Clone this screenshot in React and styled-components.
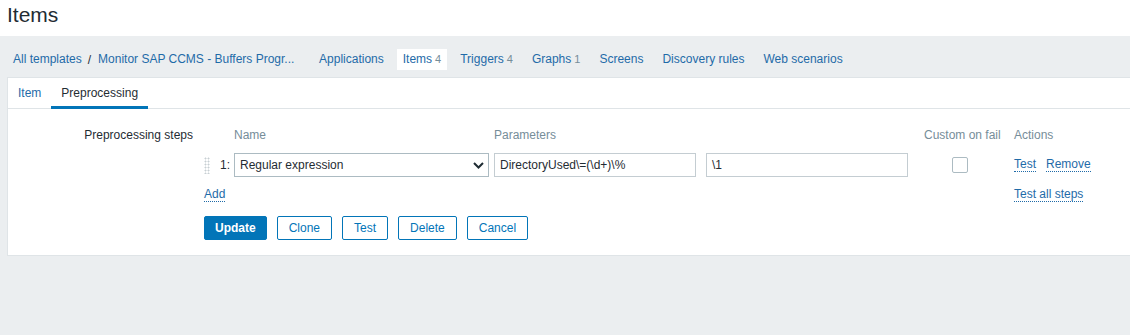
import React from "react";
import styled, { createGlobalStyle } from "styled-components";

const GlobalStyle = createGlobalStyle`
  html, body {
    margin: 0;
    padding: 0;
    background: #ebeef0;
    overflow: hidden;
  }
  body {
    font-family: "Liberation Sans", Arial, sans-serif;
    font-size: 12px;
    color: #1f2c33;
  }
`;

const Page = styled.div`
  width: 1160px;
  min-height: 335px;
  background: #ebeef0;
`;

const Header = styled.header`
  height: 36px;
  box-sizing: border-box;
  background: #fff;
  padding: 3px 0 0 7px;
  h1 {
    margin: 0;
    font-size: 21px;
    font-weight: normal;
    color: #1f2c33;
    line-height: 24px;
  }
`;

const Nav = styled.nav`
  display: flex;
  align-items: center;
  gap: 7px;
  padding: 13px 7px 7px;
  height: 21px;
`;

const Crumbs = styled.div`
  display: flex;
  align-items: center;
`;

const Sep = styled.span`
  color: #1f2c33;
  margin: 0 7px 0 6px;
`;

const NavLink = styled.a`
  display: block;
  padding: 3px 6px 4px;
  color: #1f6ba8;
  text-decoration: none;
  line-height: 14px;
  white-space: nowrap;
  background: ${(p) => (p.$selected ? "#fff" : "transparent")};
  width: ${(p) => (p.$truncate ? "202px" : "auto")};
  overflow: hidden;
  text-overflow: ellipsis;
`;

const Count = styled.span`
  color: #768d99;
  margin-left: 3px;
  font-size: 11px;
`;

const Panel = styled.section`
  margin-left: 7px;
  background: #fff;
  border: 1px solid #dfe4e7;
  border-right: none;
  height: 177px;
`;

const Tabs = styled.div`
  display: flex;
  height: 30px;
  border-bottom: 1px solid #dfe4e7;
`;

const Tab = styled.a`
  display: flex;
  align-items: center;
  padding: 0 10px;
  color: ${(p) => (p.$active ? "#1f2c33" : "#1f6ba8")};
  border-bottom: 3px solid ${(p) => (p.$active ? "#0275b8" : "transparent")};
  margin-bottom: -1px;
  padding-top: 1px;
`;

const Form = styled.div`
  padding-top: 19px;
`;

const FormRow = styled.div`
  display: flex;
  gap: 11px;
`;

const Label = styled.div`
  width: 185px;
  text-align: right;
  line-height: 14px;
  color: #1f2c33;
`;

const Steps = styled.div`
  display: grid;
  grid-template-columns: 30px 260px 212px 218px 90px 120px;
  align-items: center;
`;

const Th = styled.div`
  color: #768d99;
  line-height: 14px;
  height: 14px;
  margin-bottom: 11px;
`;

const Cell = styled.div`
  display: flex;
  align-items: center;
  height: 24px;
  gap: ${(p) => p.$gap || 0}px;
`;

const Handle = styled.span`
  width: 6px;
  height: 17px;
  background-image: radial-gradient(circle, #c8cfd3 0.9px, transparent 1.1px);
  background-size: 3px 3px;
`;

const Num = styled.span`
  margin-left: 9px;
  width: 11px;
  text-align: right;
`;

const SelectBox = styled.div`
  box-sizing: border-box;
  width: 255px;
  height: 24px;
  border: 1px solid #acbbc2;
  display: flex;
  align-items: center;
  justify-content: space-between;
  padding: 0 4px 0 5px;
  color: #1f2c33;
  background: #fff;
  svg {
    display: block;
  }
`;

const Input = styled.div`
  box-sizing: border-box;
  width: 202px;
  height: 24px;
  border: 1px solid #c4cdd2;
  display: flex;
  align-items: center;
  padding: 0 5px;
  color: #1f2c33;
  white-space: pre;
`;

const Check = styled.span`
  box-sizing: border-box;
  width: 16px;
  height: 16px;
  border: 1px solid #acbbc2;
  border-radius: 2px;
  margin-left: 28px;
`;

const DotLink = styled.a`
  color: #1f6ba8;
  text-decoration: none;
  line-height: 13px;
  border-bottom: 1px dotted #1f6ba8;
  white-space: nowrap;
`;

const AddRow = styled.div`
  grid-column: ${(p) => p.$col};
  margin-top: 11px;
  line-height: 14px;
  display: flex;
`;

const Buttons = styled.div`
  display: flex;
  gap: 10px;
  margin: 14px 0 0 196px;
`;

const Button = styled.button`
  height: 24px;
  padding: 0 ${(p) => (p.$primary ? 10 : 11)}px;
  font-family: "Liberation Sans", Arial, sans-serif;
  font-size: 12px;
  border-radius: 2px;
  border: 1px solid #0275b8;
  background: ${(p) => (p.$primary ? "#0275b8" : "#fff")};
  color: ${(p) => (p.$primary ? "#fff" : "#0275b8")};
  font-weight: ${(p) => (p.$primary ? "bold" : "normal")};
  cursor: pointer;
`;

const Chevron = () => (
  <svg width="11" height="7" viewBox="0 0 11 7">
    <path d="M1 1l4.5 4.5L10 1" fill="none" stroke="#1f2c33" strokeWidth="2" />
  </svg>
);

export default function App() {
  return (
    <Page>
      <GlobalStyle />
      <Header>
        <h1>Items</h1>
      </Header>
      <Nav>
        <Crumbs>
          <NavLink style={{ paddingRight: 0 }}>All templates</NavLink>
          <Sep>/</Sep>
          <NavLink $truncate style={{ paddingLeft: 0 }}>
            Monitor SAP CCMS - Buffers Progr...
          </NavLink>
        </Crumbs>
        <NavLink>Applications</NavLink>
        <NavLink $selected>
          Items<Count>4</Count>
        </NavLink>
        <NavLink>
          Triggers<Count>4</Count>
        </NavLink>
        <NavLink>
          Graphs<Count>1</Count>
        </NavLink>
        <NavLink>Screens</NavLink>
        <NavLink>Discovery rules</NavLink>
        <NavLink>Web scenarios</NavLink>
      </Nav>
      <Panel>
        <Tabs>
          <Tab>Item</Tab>
          <Tab $active>Preprocessing</Tab>
        </Tabs>
        <Form>
          <FormRow>
            <Label>Preprocessing steps</Label>
            <Steps>
              <Th />
              <Th>Name</Th>
              <Th>Parameters</Th>
              <Th />
              <Th>Custom on fail</Th>
              <Th>Actions</Th>

              <Cell>
                <Handle />
                <Num>1:</Num>
              </Cell>
              <Cell>
                <SelectBox>
                  <span>Regular expression</span>
                  <Chevron />
                </SelectBox>
              </Cell>
              <Cell>
                <Input>DirectoryUsed\=(\d+)\%</Input>
              </Cell>
              <Cell>
                <Input>\1</Input>
              </Cell>
              <Cell>
                <Check />
              </Cell>
              <Cell $gap={10}>
                <DotLink>Test</DotLink>
                <DotLink>Remove</DotLink>
              </Cell>

              <AddRow $col="1 / span 5">
                <DotLink>Add</DotLink>
              </AddRow>
              <AddRow $col="6">
                <DotLink>Test all steps</DotLink>
              </AddRow>
            </Steps>
          </FormRow>
          <Buttons>
            <Button $primary>Update</Button>
            <Button>Clone</Button>
            <Button>Test</Button>
            <Button>Delete</Button>
            <Button>Cancel</Button>
          </Buttons>
        </Form>
      </Panel>
    </Page>
  );
}
